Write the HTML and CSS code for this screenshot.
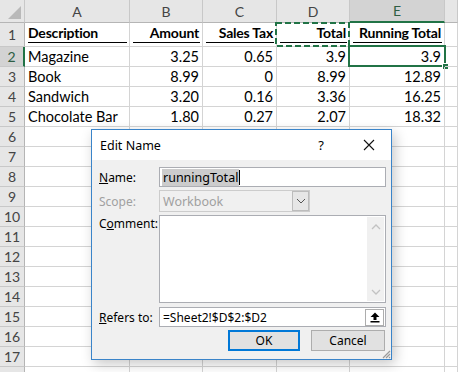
FILE: index.html
```html
<!DOCTYPE html>
<html>
<head>
<meta charset="utf-8">
<link rel="stylesheet" href="styles.css">
</head>
<body>
<div class="sheet">
  <div class="ch corner"><span class="tri"></span></div>
  <div class="ch">A</div>
  <div class="ch">B</div>
  <div class="ch">C</div>
  <div class="ch">D</div>
  <div class="ch sel">E</div>
  <div class="ch"></div>

  <div class="rh">1</div>
  <div class="c hd left"><span class="u">Description</span></div>
  <div class="c hd"><span class="u">Amount</span></div>
  <div class="c hd"><span class="u">Sales Tax</span></div>
  <div class="c hd copy"><span class="u">Total</span>
    <svg class="ants" width="75" height="25" viewBox="0 0 75 25"><rect x="1" y="1" width="73" height="23" fill="none" stroke="#217346" stroke-width="2" stroke-dasharray="6 3"/></svg>
  </div>
  <div class="c hd"><span class="u">Running Total</span></div>
  <div class="c"></div>

  <div class="rh rsel">2</div>
  <div class="c left">Magazine</div>
  <div class="c">3.25</div>
  <div class="c">0.65</div>
  <div class="c">3.9</div>
  <div class="c active">3.9<span class="selbox"></span><span class="handle"></span></div>
  <div class="c"></div>

  <div class="rh">3</div>
  <div class="c left">Book</div>
  <div class="c">8.99</div>
  <div class="c">0</div>
  <div class="c">8.99</div>
  <div class="c">12.89</div>
  <div class="c"></div>

  <div class="rh">4</div>
  <div class="c left">Sandwich</div>
  <div class="c">3.20</div>
  <div class="c">0.16</div>
  <div class="c">3.36</div>
  <div class="c">16.25</div>
  <div class="c"></div>

  <div class="rh">5</div>
  <div class="c left">Chocolate Bar</div>
  <div class="c">1.80</div>
  <div class="c">0.27</div>
  <div class="c">2.07</div>
  <div class="c">18.32</div>
  <div class="c"></div>

  <div class="rh">6</div><div class="c"></div><div class="c"></div><div class="c"></div><div class="c"></div><div class="c"></div><div class="c"></div>
  <div class="rh">7</div><div class="c"></div><div class="c"></div><div class="c"></div><div class="c"></div><div class="c"></div><div class="c"></div>
  <div class="rh">8</div><div class="c"></div><div class="c"></div><div class="c"></div><div class="c"></div><div class="c"></div><div class="c"></div>
  <div class="rh">9</div><div class="c"></div><div class="c"></div><div class="c"></div><div class="c"></div><div class="c"></div><div class="c"></div>
  <div class="rh">10</div><div class="c"></div><div class="c"></div><div class="c"></div><div class="c"></div><div class="c"></div><div class="c"></div>
  <div class="rh">11</div><div class="c"></div><div class="c"></div><div class="c"></div><div class="c"></div><div class="c"></div><div class="c"></div>
  <div class="rh">12</div><div class="c"></div><div class="c"></div><div class="c"></div><div class="c"></div><div class="c"></div><div class="c"></div>
  <div class="rh">13</div><div class="c"></div><div class="c"></div><div class="c"></div><div class="c"></div><div class="c"></div><div class="c"></div>
  <div class="rh">14</div><div class="c"></div><div class="c"></div><div class="c"></div><div class="c"></div><div class="c"></div><div class="c"></div>
  <div class="rh">15</div><div class="c"></div><div class="c"></div><div class="c"></div><div class="c"></div><div class="c"></div><div class="c"></div>
  <div class="rh">16</div><div class="c"></div><div class="c"></div><div class="c"></div><div class="c"></div><div class="c"></div><div class="c"></div>
  <div class="rh">17</div><div class="c"></div><div class="c"></div><div class="c"></div><div class="c"></div><div class="c"></div><div class="c"></div>
  <div class="rh"></div><div class="c"></div><div class="c"></div><div class="c"></div><div class="c"></div><div class="c"></div><div class="c"></div>
</div>

<div class="dialog">
  <div class="titlebar">
    <span class="title">Edit Name</span>
    <span class="help">?</span>
    <svg class="close" width="12" height="12" viewBox="0 0 12 12"><path d="M1 1L11 11M11 1L1 11" stroke="#111" stroke-width="1.1" fill="none"/></svg>
  </div>
  <div class="dbody">
    <div class="frow r-name">
      <label class="lbl"><u>N</u>ame:</label>
      <div class="field wide"><span class="seltext">runningTotal</span><span class="caret"></span></div>
    </div>
    <div class="frow r-scope">
      <label class="lbl dis">Scope:</label>
      <div class="combo"><span class="ctext">Workbook</span>
        <span class="dd"><svg width="10" height="6" viewBox="0 0 10 6"><path d="M1 1L5 5L9 1" stroke="#555" stroke-width="1" fill="none"/></svg></span>
      </div>
    </div>
    <div class="frow r-comment">
      <label class="lbl">C<u>o</u>mment:</label>
      <div class="memo">
        <div class="memo-area"></div>
        <div class="vscroll">
          <svg width="10" height="6" viewBox="0 0 10 6"><path d="M1 5L5 1L9 5" stroke="#c2c2c2" stroke-width="1.3" fill="none"/></svg>
          <svg width="10" height="6" viewBox="0 0 10 6"><path d="M1 1L5 5L9 1" stroke="#c2c2c2" stroke-width="1.3" fill="none"/></svg>
        </div>
      </div>
    </div>
    <div class="frow r-refers">
      <label class="lbl"><u>R</u>efers to:</label>
      <div class="field wide ref"><span class="rtext">=Sheet2!$D$2:$D2</span>
        <span class="collapse"><svg width="10" height="11" viewBox="0 0 10 11"><path d="M5 0.5L9.5 5H6.5V8H3.5V5H0.5Z" fill="#000"/><rect x="0.5" y="9" width="9" height="1.5" fill="#000"/></svg></span>
      </div>
    </div>
    <div class="btnrow">
      <button class="btn ok">OK</button>
      <button class="btn">Cancel</button>
    </div>
    <svg class="grip" width="10" height="10" viewBox="0 0 10 10"><path d="M9 2L2 9M9 5L5 9M9 8L8 9" stroke="#9a9a9a" stroke-width="1.2"/></svg>
  </div>
</div>
</body>
</html>
```

FILE: styles.css
```css
html, body {
  margin: 0;
  padding: 0;
  width: 458px;
  height: 372px;
  overflow: hidden;
  background: #fff;
}

.sheet {
  display: grid;
  grid-template-columns: 25px 105px 73px 74px 73px 95px 13px;
  grid-template-rows: 23px 24px repeat(17, 20px);
  font-family: Lato, "Liberation Sans", sans-serif;
  font-size: 14.5px;
  color: #000;
}

.ch {
  background: #e6e6e6;
  border-right: 1px solid #c8c8c8;
  border-bottom: 1px solid #b5b5b5;
  box-sizing: border-box;
  display: flex;
  align-items: center;
  justify-content: center;
  color: #444;
  font-size: 14px;
}
.ch.sel {
  background: #d3d3d3;
  border-bottom: 2px solid #217346;
  color: #2e5e44;
}
.corner {
  position: relative;
}
.tri {
  position: absolute;
  right: 3px;
  bottom: 3px;
  width: 0;
  height: 0;
  border-left: 13px solid transparent;
  border-bottom: 13px solid #b9b9b9;
}

.rh {
  background: #e6e6e6;
  border-right: 1px solid #b5b5b5;
  border-bottom: 1px solid #c8c8c8;
  box-sizing: border-box;
  display: flex;
  align-items: center;
  justify-content: center;
  color: #444;
  font-size: 14px;
}
.rh.rsel {
  background: #d3d3d3;
  border-right: 2px solid #217346;
  color: #2e5e44;
}

.c {
  border-right: 1px solid #d4d4d4;
  border-bottom: 1px solid #d4d4d4;
  box-sizing: border-box;
  display: flex;
  align-items: center;
  justify-content: flex-end;
  padding: 0 3px 0 3px;
  white-space: nowrap;
  position: relative;
}
.c.left {
  justify-content: flex-start;
}
.c.hd {
  font-weight: bold;
  font-size: 14px;
  letter-spacing: -0.2px;
  align-items: flex-end;
  padding: 0 2px 3px 3px;
}
.u {
  flex: 1;
  border-bottom: 1px solid #000;
  text-align: right;
  line-height: 18px;
  padding-right: 1px;
}
.c.left .u {
  text-align: left;
}

.ants {
  position: absolute;
  left: -2px;
  top: -1px;
}

.selbox {
  position: absolute;
  left: -2px;
  top: -2px;
  right: -2px;
  bottom: -1px;
  border: 2px solid #217346;
}
.handle {
  position: absolute;
  right: -5px;
  bottom: -4px;
  width: 5px;
  height: 5px;
  background: #217346;
  border: 1px solid #fff;
}

/* Dialog */
.dialog {
  position: absolute;
  left: 91px;
  top: 129px;
  width: 301px;
  height: 231px;
  box-sizing: border-box;
  border: 1px solid #3a84c9;
  background: #f0f0f0;
  box-shadow: 3px 4px 12px rgba(0, 0, 0, 0.22);
  font-family: "Noto Sans", "Open Sans", sans-serif;
  font-size: 12px;
  color: #000;
  display: flex;
  flex-direction: column;
}
.titlebar {
  height: 30px;
  background: #fff;
  display: flex;
  align-items: center;
  padding-left: 8px;
  flex-shrink: 0;
}
.title {
  font-size: 12.5px;
  flex: 1;
}
.help {
  font-size: 13px;
  margin-right: 39px;
}
.close {
  margin-right: 16px;
}

.dbody {
  flex: 1;
  position: relative;
  padding: 7px 5px 0 7px;
}
.frow {
  display: flex;
  align-items: center;
}
.lbl {
  width: 60px;
  flex-shrink: 0;
}
.lbl.dis {
  color: #a0a0a0;
}
.r-name {
  height: 20px;
}
.r-scope {
  height: 22px;
  margin-top: 3px;
}
.r-comment {
  height: 88px;
  margin-top: 3px;
  align-items: flex-start;
}
.r-refers {
  height: 20px;
  margin-top: 4px;
}

.field {
  height: 20px;
  box-sizing: border-box;
  border: 1px solid #abadb3;
  background: #fff;
  display: flex;
  align-items: center;
  padding-left: 2px;
}
.wide {
  width: 227px;
}
.seltext {
  background: #cccccc;
  padding: 1px 1px;
  font-size: 12.5px;
  line-height: 15px;
}
.caret {
  width: 1px;
  height: 15px;
  background: #000;
}

.combo {
  width: 151px;
  height: 22px;
  box-sizing: border-box;
  border: 1px solid #cccccc;
  background: #f0f0f0;
  display: flex;
  align-items: center;
}
.ctext {
  flex: 1;
  color: #a0a0a0;
  padding-left: 3px;
  font-size: 12.5px;
}
.dd {
  width: 17px;
  height: 20px;
  box-sizing: border-box;
  border: 1px solid #bcbcbc;
  background: #e6e6e6;
  display: flex;
  align-items: center;
  justify-content: center;
}

.memo {
  width: 227px;
  height: 88px;
  box-sizing: border-box;
  border: 1px solid #abadb3;
  background: #fff;
  display: flex;
}
.memo-area {
  flex: 1;
}
.vscroll {
  width: 17px;
  margin: 1px 1px 1px 0;
  background: #f0f0f0;
  display: flex;
  flex-direction: column;
  align-items: center;
  justify-content: space-between;
  padding: 7px 0 6px;
}

.ref {
  justify-content: space-between;
  padding-right: 1px;
}
.rtext {
  font-size: 12px;
  padding-left: 1px;
}
.collapse {
  width: 19px;
  height: 17px;
  box-sizing: border-box;
  border: 1px solid #adadad;
  background: #fff;
  display: flex;
  align-items: center;
  justify-content: center;
}

.btnrow {
  display: flex;
  justify-content: flex-end;
  gap: 11px;
  margin-top: 3px;
  padding-right: 1px;
}
.btn {
  height: 21px;
  width: 74px;
  box-sizing: border-box;
  border: 1px solid #adadad;
  background: #e1e1e1;
  font-family: "Noto Sans", "Open Sans", sans-serif;
  font-size: 12px;
  color: #000;
  padding: 0;
  margin: 0;
}
.btn.ok {
  width: 72px;
  border: 2px solid #0078d7;
}
.grip {
  position: absolute;
  right: 0;
  bottom: 0;
}
```
